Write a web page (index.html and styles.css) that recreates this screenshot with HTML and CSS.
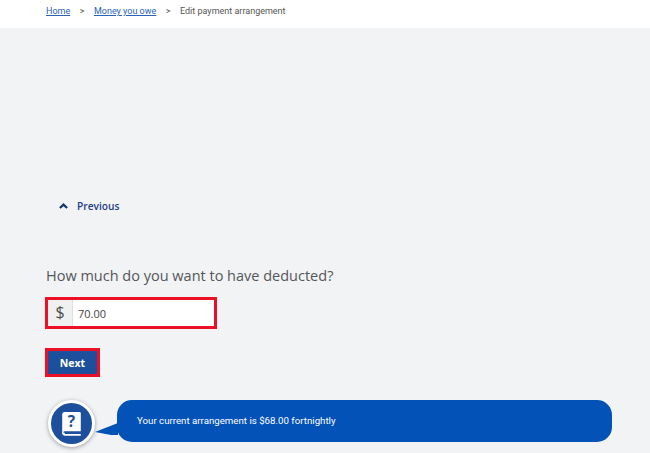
FILE: index.html
```html
<!DOCTYPE html>
<html>
<head>
<meta charset="utf-8">
<title>Edit payment arrangement</title>
<link rel="stylesheet" href="styles.css">
</head>
<body>
<nav class="crumbs">
  <a href="#">Home</a><span class="sep">&gt;</span><a href="#">Money you owe</a><span class="sep">&gt;</span><span>Edit payment arrangement</span>
</nav>
<main class="main">
  <a class="prev" href="#">
    <svg class="chev" width="9" height="6" viewBox="0 0 9 6"><path d="M0.9 5 L4.5 1.6 L8.1 5" fill="none" stroke="#12376f" stroke-width="2.2"/></svg>
    Previous
  </a>
  <h1 class="question">How much do you want to have deducted?</h1>
  <div class="amount">
    <span class="dollar">$</span>
    <input class="amount-input" type="text" value="70.00">
  </div>
  <button class="next">Next</button>
  <div class="chat">
    <div class="avatar">
      <svg width="21" height="26" viewBox="0 0 26 32">
        <path d="M4 1 H23 a1.500 1.500 0 0 1 1.500 1.500 V25 H4.500 a2 2 0 0 0 -2 2 H1.500 V4 a3 3 0 0 1 2.500 -3 Z" fill="#fff"/>
        <path d="M1.500 26 a3.500 3.500 0 0 0 3 4.500 H24.500 V28.500 H5 a1 1 0 0 1 0 -1.500 Z" fill="#fff"/>
        <text class="avatar-q" x="13" y="20" text-anchor="middle">?</text>
      </svg>
    </div>
    <svg class="tail" width="23" height="12" viewBox="0 0 23 12"><path d="M0 9 L23 0 V12 H16 Z" fill="#0352b8"/></svg>
    <div class="bubble">Your current arrangement is $68.00 fortnightly</div>
  </div>
</main>
</body>
</html>
```

FILE: styles.css
```css
html, body {
  margin: 0;
  padding: 0;
  height: 453px;
  overflow: hidden;
}

body {
  background: #f2f3f5;
  font-family: "Open Sans", "Liberation Sans", sans-serif;
  color: #4a4a4a;
}

.crumbs {
  background: #fff;
  height: 28px;
  padding: 4px 0 0 46px;
  box-sizing: border-box;
  font-family: Roboto, "Liberation Sans", sans-serif;
  font-size: 9px;
  line-height: 14px;
  color: #555;
}

.crumbs a {
  color: #2a62b4;
}

.sep {
  margin: 0 9.500px;
}

.main {
  padding: 170px 38px 0 46px;
}

.prev {
  display: flex;
  align-items: center;
  gap: 9px;
  margin-left: 13px;
  height: 16px;
  font-size: 10.200px;
  font-weight: 600;
  color: #1d3f86;
  text-decoration: none;
}

.question {
  margin: 52px 0 0;
  font-size: 14.500px;
  line-height: 20px;
  font-weight: 400;
  color: #55565a;
}

.amount {
  display: flex;
  width: 172px;
  height: 32px;
  margin: 11px 0 0 -1px;
  box-sizing: border-box;
  border: 3px solid #ed0f25;
  background: #fff;
}

.dollar {
  width: 24px;
  background: #f0f0f1;
  border-right: 1px solid #dedede;
  text-align: center;
  font-size: 16px;
  line-height: 25px;
  color: #4c4c4c;
}

.amount-input {
  flex: 1;
  min-width: 0;
  border: 0;
  padding: 0 0 0 5px;
  font: 11px "Open Sans", "Liberation Sans", sans-serif;
  color: #444;
  background: #fff;
}

.next {
  display: block;
  width: 55px;
  height: 29px;
  margin: 19px 0 0 -1px;
  padding: 0;
  box-sizing: border-box;
  border: 3px solid #ed0f25;
  background: #1c4f9c;
  color: #fff;
  font: 700 10.500px "Open Sans", "Liberation Sans", sans-serif;
}

.chat {
  display: flex;
  align-items: flex-start;
  margin-top: 23px;
}

.avatar {
  flex: none;
  width: 41px;
  height: 41px;
  margin-left: 2px;
  border: 3px solid #fff;
  border-radius: 50%;
  background: #1c4f9c;
  box-shadow: 0 1px 4px rgba(0, 0, 0, .35);
  display: flex;
  align-items: center;
  justify-content: center;
}

.avatar-q {
  font: 700 19px "Open Sans", "Liberation Sans", sans-serif;
  fill: #1c4f9c;
}

.tail {
  flex: none;
  margin: 23px -1px 0 0;
}

.bubble {
  flex: 1;
  height: 42px;
  padding-left: 20px;
  border-radius: 15px;
  background: #0352b8;
  color: #fff;
  font-family: Roboto, "Liberation Sans", sans-serif;
  font-size: 9.700px;
  line-height: 42px;
}
```
